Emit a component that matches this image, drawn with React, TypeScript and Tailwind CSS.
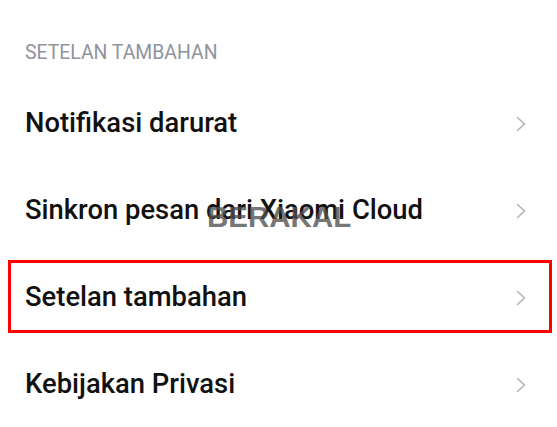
import React from 'react';

const items = ['Notifikasi darurat', 'Sinkron pesan dari Xiaomi Cloud', 'Setelan tambahan', 'Kebijakan Privasi'];

const Chevron = () => (
  <svg width="12" height="16" viewBox="0 0 12 16" fill="none" className="shrink-0">
    <path d="M2.5 1.5 L9.5 8 L2.5 14.5" stroke="#b4b4b4" strokeWidth="1.6" strokeLinecap="round" strokeLinejoin="round" />
  </svg>
);

export default function App() {
  return (
    <div
      className="relative w-[557px] h-[427px] overflow-hidden bg-white"
      style={{ fontFamily: 'Roboto, "Noto Sans", sans-serif' }}
    >
      <div className="h-[80px] pt-[40px] pl-[25px]">
        <div className="text-[19.4px] leading-[26px] text-[#8f939c]">SETELAN TAMBAHAN</div>
      </div>

      {items.map((label, i) => (
        <div key={label} className="relative flex h-[87px] items-center justify-between pl-[25px] pr-[30px]">
          <span className="text-[27.4px] font-medium text-[#111111]">{label}</span>
          <Chevron />
          {i === 2 && (
            <div className="pointer-events-none absolute left-[8px] right-[5px] top-[6px] bottom-[8px] border-[3px] border-[#ff0000]" />
          )}
        </div>
      ))}

      <div
        className="pointer-events-none absolute left-[207px] top-[200px] text-[29.5px] font-bold leading-[34px] text-[#505050]/80"
        style={{ fontFamily: '"Liberation Sans", Arial, sans-serif' }}
      >
        BERAKAL
      </div>
    </div>
  );
}
